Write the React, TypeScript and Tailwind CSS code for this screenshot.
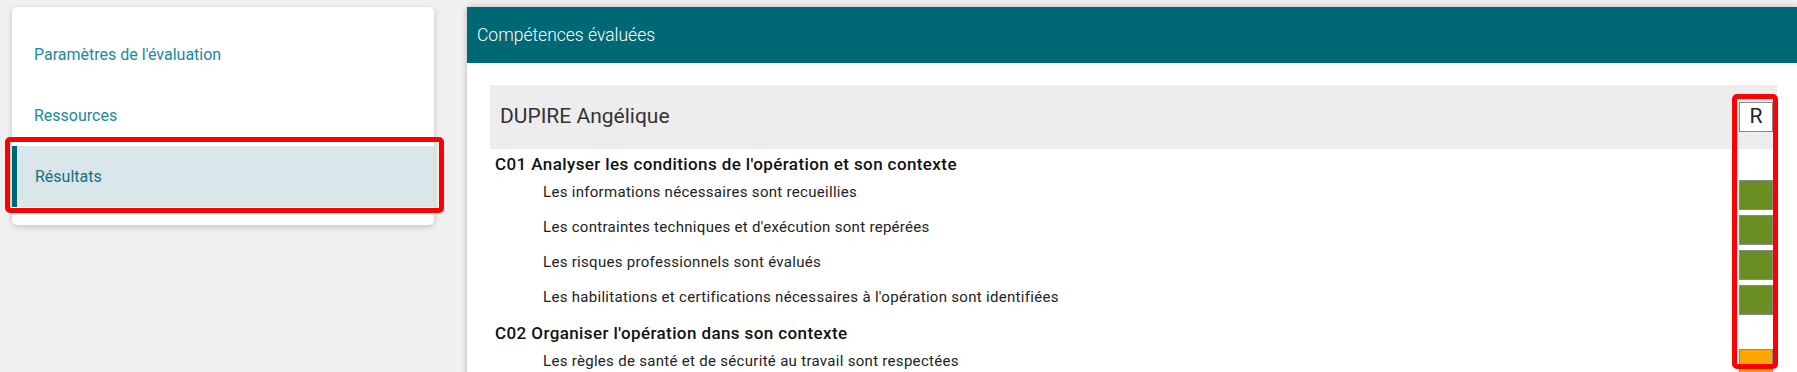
import React from 'react';

type Critere = { label: string; color: string };
type Competence = { code: string; title: string; criteres: Critere[] };

const GREEN = 'bg-[#6b8e23]';
const ORANGE = 'bg-[#ffa500]';

const competences: Competence[] = [
  {
    code: 'C01',
    title: "Analyser les conditions de l'opération et son contexte",
    criteres: [
      { label: 'Les informations nécessaires sont recueillies', color: GREEN },
      { label: "Les contraintes techniques et d'exécution sont repérées", color: GREEN },
      { label: 'Les risques professionnels sont évalués', color: GREEN },
      { label: "Les habilitations et certifications nécessaires à l'opération sont identifiées", color: GREEN },
    ],
  },
  {
    code: 'C02',
    title: "Organiser l'opération dans son contexte",
    criteres: [
      { label: 'Les règles de santé et de sécurité au travail sont respectées', color: ORANGE },
    ],
  },
];

const navItems = [
  { label: "Paramètres de l'évaluation", active: false },
  { label: 'Ressources', active: false },
  { label: 'Résultats', active: true },
];

const Sidebar: React.FC = () => (
  <div className="relative w-[422px] shrink-0 bg-white rounded-[5px] shadow-[0_2px_6px_rgba(0,0,0,0.18)] pt-[17px] pb-[18px]">
    {navItems.map((item) =>
      item.active ? (
        <div key={item.label} className="h-[61px] flex items-center bg-[#d9e7eb] border-l-[5px] border-[#006874] pl-[18px] text-[16px] text-[#136f7e]">
          {item.label}
        </div>
      ) : (
        <div key={item.label} className="h-[61px] flex items-center pl-[22px] text-[16px] text-[#2089a0]">
          {item.label}
        </div>
      )
    )}
    {/* annotation */}
    <div className="absolute left-[-7px] top-[130px] w-[439px] h-[76px] border-[5px] border-[#ff0000] rounded-[5px]" />
  </div>
);

const Box: React.FC<{ color?: string; children?: React.ReactNode }> = ({ color = 'bg-white', children }) => (
  <div className={`w-[34px] h-[30px] shrink-0 border border-[#8a8a8a] ${color} flex items-center justify-center text-[21px] text-[#222]`}>
    {children}
  </div>
);

const Resultats: React.FC = () => (
  <div className="relative flex-1 min-w-0 bg-white rounded-tl-[4px] shadow-[0_0_6px_rgba(0,0,0,0.25)]">
    <div className="h-[56px] bg-[#006874] flex items-center pl-[10px] text-[17.5px] text-white font-light">
      Compétences évaluées
    </div>
    <div className="pt-[22px] pl-[23px] pr-[20px]">
      <div className="h-[64px] bg-[#ededed] flex items-center justify-between pl-[10px] pr-[4px]">
        <span className="text-[21px] text-[#333]">DUPIRE Angélique</span>
        <Box>R</Box>
      </div>
      {competences.map((c) => (
        <div key={c.code}>
          <div className="h-[29px] pt-[5px] pl-[5px] text-[17px] leading-[20px] tracking-[0.4px] font-medium text-[#111]">
            {c.code} {c.title}
          </div>
          {c.criteres.map((cr) => (
            <div key={cr.label} className="h-[35px] flex items-start justify-between pr-[4px]">
              <span className="pl-[53px] pt-[4px] text-[15px] leading-[20px] tracking-[0.3px] text-[#222]">{cr.label}</span>
              <div className="mt-[2px]">
                <Box color={cr.color} />
              </div>
            </div>
          ))}
        </div>
      ))}
    </div>
    {/* annotation */}
    <div className="absolute left-[1265px] top-[87px] w-[46px] h-[275px] border-[5px] border-[#ff0000] rounded-[5px]" />
  </div>
);

export default function App() {
  return (
    <div className="w-[1797px] h-[372px] overflow-hidden bg-[#f0f0f0] flex items-start pt-[7px] pl-[12px] gap-[33px] font-['Roboto',sans-serif]">
      <Sidebar />
      <Resultats />
    </div>
  );
}
